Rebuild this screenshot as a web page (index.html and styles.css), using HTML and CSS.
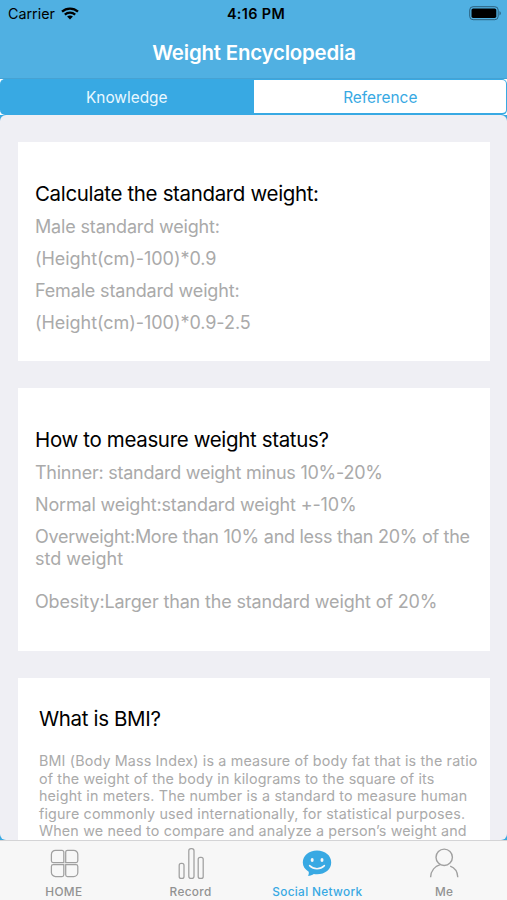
FILE: index.html
```html
<!DOCTYPE html>
<html lang="en">
<head>
<meta charset="utf-8">
<title>Weight Encyclopedia</title>
<link rel="stylesheet" href="styles.css">
</head>
<body>
<div class="app">
  <header class="header">
    <div class="status">
      <div class="carrier"><span>Carrier</span>
        <svg class="wifi" width="18" height="13" viewBox="0 0 18 13"><path d="M1 4.7C5.5.6 12.5.6 17 4.7" fill="none" stroke="#000" stroke-width="2.3"/><path d="M3.8 7.6C6.8 4.9 11.2 4.9 14.2 7.6" fill="none" stroke="#000" stroke-width="2.2"/><path d="M6.1 9.6C7.8 8.1 10.2 8.1 11.9 9.6L9 12.6Z"/></svg>
      </div>
      <span class="clock">4:16 PM</span>
      <svg class="battery" width="33" height="15" viewBox="0 0 33 15"><rect x=".7" y=".7" width="28.5" height="13" rx="3.4" fill="none" stroke="#2c607d"/><rect x="2.5" y="2.5" width="24.8" height="9.4" rx="1.6"/><path d="M30.5 5v4.5c1.8-.7 1.8-3.8 0-4.5Z" fill="#2c607d"/></svg>
    </div>
    <h1 class="title">Weight Encyclopedia</h1>
  </header>
  <div class="segments">
    <div class="segment selected"><span>Knowledge</span></div>
    <div class="segment"><span>Reference</span></div>
  </div>
  <main class="content">
    <section class="card formula">
      <h2>Calculate the standard weight:</h2>
      <p>Male standard weight:</p>
      <p class="equation">(Height(cm)-100)*0.9</p>
      <p>Female standard weight:</p>
      <p class="equation">(Height(cm)-100)*0.9-2.5</p>
    </section>
    <section class="card ranges">
      <h2>How to measure weight status?</h2>
      <p class="snug">Thinner: standard weight minus 10%-20%</p>
      <p>Normal weight:standard weight +-10%</p>
      <p class="double"><span class="tight">Overweight:More than 10% and less than 20% of the</span><br>std weight</p>
      <p>Obesity:Larger than the standard weight of 20%</p>
    </section>
    <section class="card bmi">
      <h2>What is BMI?</h2>
      <div class="description">BMI (Body Mass Index) is a measure of body fat that is the ratio<br>of the weight of the body in kilograms to the square of its<br>height in meters. The number is a standard to measure human<br>figure commonly used internationally, for statistical purposes.<br>When we need to compare and analyze a person’s weight and</div>
    </section>
  </main>
  <nav class="tabs">
    <div class="tab">
      <svg width="34" height="34" viewBox="0 0 34 34" fill="none" stroke="#a0a0a0" stroke-width="1.25"><path d="M8.5 4.3H15a1.8 1.8 0 0 1 1.8 1.8V16.5H6.2a1.8 1.8 0 0 1-1.8-1.8V8.4a4.1 4.1 0 0 1 4.1-4.1ZM20.5 4.3h6.2a4.1 4.1 0 0 1 4.1 4.1v6.3a1.8 1.8 0 0 1-1.8 1.8H18.7V6.1a1.8 1.8 0 0 1 1.8-1.8ZM6.2 18.6H16.8v10.1a1.8 1.8 0 0 1-1.8 1.8H8.5a4.1 4.1 0 0 1-4.1-4.1v-6a1.8 1.8 0 0 1 1.8-1.8ZM18.7 18.6H29a1.8 1.8 0 0 1 1.8 1.8v6a4.1 4.1 0 0 1-4.1 4.1h-6.2a1.8 1.8 0 0 1-1.8-1.8Z"/></svg>
      <span>HOME</span>
    </div>
    <div class="tab">
      <svg width="34" height="34" viewBox="0 0 34 34" fill="none" stroke="#a0a0a0" stroke-width="1.25"><rect x="5.2" y="17.4" width="4.8" height="15" rx="2"/><rect x="14.8" y="2.6" width="5.2" height="29.8" rx="2.2"/><rect x="24.2" y="11.3" width="5" height="21.1" rx="2"/></svg>
      <span>Record</span>
    </div>
    <div class="tab active">
      <svg width="34" height="34" viewBox="0 0 34 34"><path fill="#38a9e3" d="M17 4.6c8.2 0 14.2 5.1 14.2 11.8S25.2 28.2 17 28.2c-1.2 0-2.1-.1-3.2-.3-1.6 1.2-3.7 1.9-6 1.8 1-1.1 1.2-2.4.9-4C5 23.6 2.8 20.6 2.8 16.6 2.8 9.7 8.8 4.6 17 4.6Z"/><ellipse cx="12.2" cy="14" rx="1.5" ry="2.1" fill="#f7f7f7"/><ellipse cx="22" cy="14" rx="1.5" ry="2.1" fill="#f7f7f7"/><path d="M9.6 19.6c4.2 4.1 10.6 4.1 14.8 0" fill="none" stroke="#f7f7f7" stroke-width="1.5" stroke-linecap="round"/></svg>
      <span>Social Network</span>
    </div>
    <div class="tab">
      <svg width="34" height="34" viewBox="0 0 34 34" fill="none" stroke="#a0a0a0" stroke-width="1.4"><circle cx="17.2" cy="11.3" r="8.2"/><path d="M3.6 31.2c.3-6.2 4.2-11 9.6-12.5M23.2 20.2c4.6 1.6 7.3 6 7.6 11"/></svg>
      <span>Me</span>
    </div>
  </nav>
</div>
</body>
</html>
```

FILE: styles.css
```css
* { box-sizing: border-box; }
body { margin: 0; font-family: Inter, "Liberation Sans", sans-serif; color: #000; }
h1, h2, p { margin: 0; font-weight: 400; }
svg { display: block; flex: none; }
.app { width: 507px; height: 900px; display: flex; flex-direction: column; overflow: hidden; background: #38a9e3; }
.header { height: 79px; flex: none; background: #50b0e2; border-bottom: 1px solid #46a2d3; }
.status { height: 27px; padding: 0 5px 0 8px; display: grid; grid-template-columns: 1fr auto 1fr; align-items: center; font-size: 14.3px; }
.carrier { display: flex; align-items: center; gap: 6px; }
.clock { font-weight: 600; font-size: 14.4px; letter-spacing: 0.35px; margin-left: 2px; }
.battery { justify-self: end; }
.title { height: 51px; line-height: 51px; padding-left: 1px; text-align: center; color: #fff; font-weight: 600; font-size: 20.4px; letter-spacing: -0.18px; }
.segments { height: 36px; flex: none; display: flex; background: linear-gradient(90deg, #fff 6px, #38a9e3 6px 501px, #fff 501px); }
.segment { flex: 1; display: flex; align-items: center; justify-content: center; padding: 1px 0 0 1px; font-size: 15.4px; color: #38a9e3; background: #fff; border: 1px solid #38a9e3; border-left: 0; border-bottom-width: 2px; border-radius: 0 5px 5px 0; }
.selected { color: #e9f8ff; background: #38a9e3; border-radius: 5px 0 0 5px; }
.content { height: 725px; flex: none; padding: 27px 17px 0 18px; display: flex; flex-direction: column; gap: 27px; overflow: hidden; background: #efeff4; border-radius: 6px; }
.card { flex: none; background: #fff; padding: 35px 0 0 17px; white-space: nowrap; }
.card h2 { font-size: 20.5px; line-height: 33px; letter-spacing: -0.35px; }
.card p { font-size: 18px; line-height: 21.6px; padding-top: 6px; color: #aaa; letter-spacing: -0.16px; height: 32.1px; }
.card .equation { letter-spacing: -0.05px; }
.card .snug { letter-spacing: -0.25px; }
.card .double { height: 65px; letter-spacing: 0; }
.tight { letter-spacing: -0.28px; }
.formula { height: 219px; }
.ranges { height: 263px; }
.bmi { height: 260px; padding: 24px 0 0 21px; }
.description { margin-top: 17px; color: #aaa; font-size: 14.3px; line-height: 17.5px; letter-spacing: 0.16px; }
.tabs { height: 60px; flex: none; display: grid; grid-template-columns: repeat(4, 1fr); background: #f7f7f7; border-top: 1px solid #d4d4d6; }
.tab { display: flex; flex-direction: column; align-items: center; padding: 5px 0 0 1px; color: #929292; font-size: 11.8px; font-weight: 500; line-height: 15px; letter-spacing: 0.35px; }
.tab span { margin-top: 5px; }
.active { color: #38a9e3; }
```
